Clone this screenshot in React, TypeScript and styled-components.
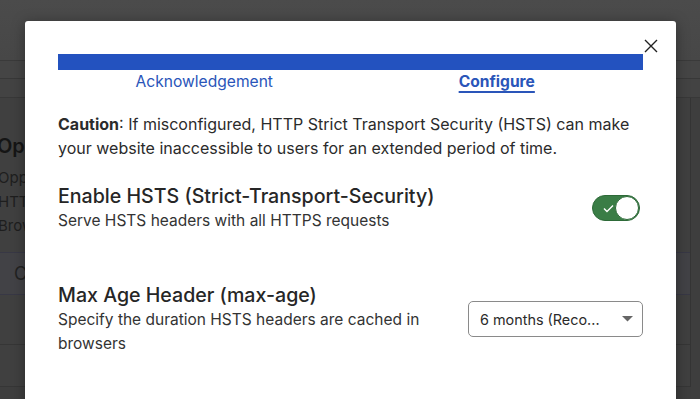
import React from "react";
import styled, { createGlobalStyle } from "styled-components";

const Global = createGlobalStyle`
  html, body { margin: 0; padding: 0; }
  body {
    width: 700px; height: 399px; overflow: hidden;
    background: #3e3e3e;
    font-family: Inter, "Noto Sans", "Liberation Sans", sans-serif;
  }
`;

const Page = styled.div`
  position: relative;
  width: 700px;
  height: 399px;
  overflow: hidden;
  background: #3e3e3e;
`;

const TopBar = styled.div`
  height: 60px;
  background: linear-gradient(#4b4b4b, #474747);
  border-bottom: 1px solid #3a3a3a;
`;

const SubBar = styled.div<{ $h: number; $bg: string }>`
  height: ${(p) => p.$h}px;
  background: ${(p) => p.$bg};
  border-bottom: 1px solid #383838;
`;

const Card = styled.div`
  width: 691px;
  border-right: 1px solid #353535;
  background: #404040;
  box-sizing: border-box;
`;

const CardBody = styled.div`
  padding: 34px 0 0 0;
  height: 155px;
  box-sizing: border-box;
  border-bottom: 1px solid #383845;
`;

const BgTitle = styled.div`
  font-size: 20px;
  font-weight: 600;
  color: #151515;
  line-height: 28px;
  margin: 0 0 6px -3px;
  white-space: nowrap;
`;

const BgText = styled.div`
  font-size: 15px;
  color: #1e1e1e;
  line-height: 24px;
  margin-left: -2px;
  white-space: nowrap;
`;

const BgButtonRow = styled.div`
  height: 41px;
  border-bottom: 1px solid #383845;
  display: flex;
  align-items: center;
  padding-left: 14px;
  font-size: 18px;
  color: #222;
  background: #424246;
`;

const BgRow = styled.div<{ $h: number }>`
  height: ${(p) => p.$h}px;
  border-bottom: 1px solid #363636;
`;

const Overlay = styled.div`
  position: absolute;
  inset: 0;
`;

const Modal = styled.div`
  position: absolute;
  left: 25px;
  top: 21px;
  width: 651px;
  height: 420px;
  background: #ffffff;
  border-radius: 3px;
  box-shadow: 0 2px 14px rgba(0, 0, 0, 0.35);
  padding: 33px 33px 0 33px;
  box-sizing: border-box;
  color: #2b2b2b;
`;

const CloseBtn = styled.button`
  position: absolute;
  top: 17px;
  right: 17px;
  width: 16px;
  height: 16px;
  padding: 0;
  border: none;
  background: none;
  display: flex;
  align-items: center;
  justify-content: center;
`;

const Progress = styled.div`
  height: 16px;
  background: #2352bf;
`;

const Tabs = styled.div`
  display: grid;
  grid-template-columns: 1fr 1fr;
`;

const Tab = styled.div<{ $active?: boolean }>`
  text-align: center;
  font-size: 15.6px;
  line-height: 24px;
  color: #2a55b9;
  font-weight: ${(p) => (p.$active ? 700 : 400)};
  text-decoration: ${(p) => (p.$active ? "underline" : "none")};
  text-decoration-thickness: 2px;
  text-underline-offset: 4px;
`;

const Caution = styled.p`
  margin: 18px 0 0 0;
  font-size: 16px;
  line-height: 24px;
  color: #2b2b2b;
  b { font-weight: 700; }
`;

const Setting = styled.div<{ $mt: number }>`
  display: flex;
  align-items: center;
  justify-content: space-between;
  gap: 24px;
  margin-top: ${(p) => p.$mt}px;
`;

const SettingText = styled.div`
  flex: 0 1 390px;
`;

const SettingTitle = styled.div`
  font-size: 19.6px;
  line-height: 26px;
  font-weight: 500;
  color: #262626;
`;

const SettingDesc = styled.div`
  font-size: 15.5px;
  line-height: 24px;
  color: #333;
`;

const Toggle = styled.div`
  width: 48px;
  height: 26px;
  border-radius: 13px;
  background: #3a7d46;
  border: 1px solid #2d6a38;
  box-sizing: border-box;
  display: flex;
  align-items: center;
  justify-content: space-between;
  padding: 0 0 0 10px;
  margin-right: 3px;
`;

const Knob = styled.div`
  width: 24px;
  height: 24px;
  border-radius: 50%;
  background: #fff;
  border: 1px solid #2d6a38;
  box-sizing: border-box;
`;

const Select = styled.div`
  width: 175px;
  height: 36px;
  box-sizing: border-box;
  border: 1px solid #8a8a8a;
  border-radius: 5px;
  display: flex;
  align-items: center;
  justify-content: space-between;
  padding: 0 9px 0 11px;
  font-size: 14.4px;
  color: #2b2b2b;
  flex: none;
`;

export default function App() {
  return (
    <>
      <Global />
      <Page>
        <TopBar />
        <SubBar $h={17} $bg="#454545" />
        <SubBar $h={18} $bg="#434343" />
        <Card>
          <CardBody>
            <BgTitle>Opportunistic Encryption</BgTitle>
            <BgText>Opportunistic Encryption allows</BgText>
            <BgText>HTTP traffic to be encrypted</BgText>
            <BgText>Browsers that support it</BgText>
          </CardBody>
          <BgButtonRow>Change</BgButtonRow>
          <BgRow $h={49} />
          <BgRow $h={41} />
        </Card>
        <Overlay>
          <Modal>
            <CloseBtn aria-label="Close">
              <svg width="14" height="14" viewBox="0 0 14 14">
                <path d="M1 1 L13 13 M13 1 L1 13" stroke="#222" strokeWidth="1.4" fill="none" />
              </svg>
            </CloseBtn>
            <Progress />
            <Tabs>
              <Tab>Acknowledgement</Tab>
              <Tab $active>Configure</Tab>
            </Tabs>
            <Caution>
              <b>Caution</b>: If misconfigured, HTTP Strict Transport Security (HSTS) can make your
              website inaccessible to users for an extended period of time.
            </Caution>
            <Setting $mt={23}>
              <SettingText>
                <SettingTitle>Enable HSTS (Strict-Transport-Security)</SettingTitle>
                <SettingDesc>Serve HSTS headers with all HTTPS requests</SettingDesc>
              </SettingText>
              <Toggle>
                <svg width="11" height="9" viewBox="0 0 11 9">
                  <path d="M1 4.5 L4 7.5 L10 1.5" stroke="#fff" strokeWidth="1.4" fill="none" />
                </svg>
                <Knob />
              </Toggle>
            </Setting>
            <Setting $mt={49}>
              <SettingText>
                <SettingTitle>Max Age Header (max-age)</SettingTitle>
                <SettingDesc>Specify the duration HSTS headers are cached in browsers</SettingDesc>
              </SettingText>
              <Select>
                <span>6 months (Reco...</span>
                <svg width="11" height="6" viewBox="0 0 11 6">
                  <path d="M0 0 L11 0 L5.5 5.5 Z" fill="#666" />
                </svg>
              </Select>
            </Setting>
          </Modal>
        </Overlay>
      </Page>
    </>
  );
}
